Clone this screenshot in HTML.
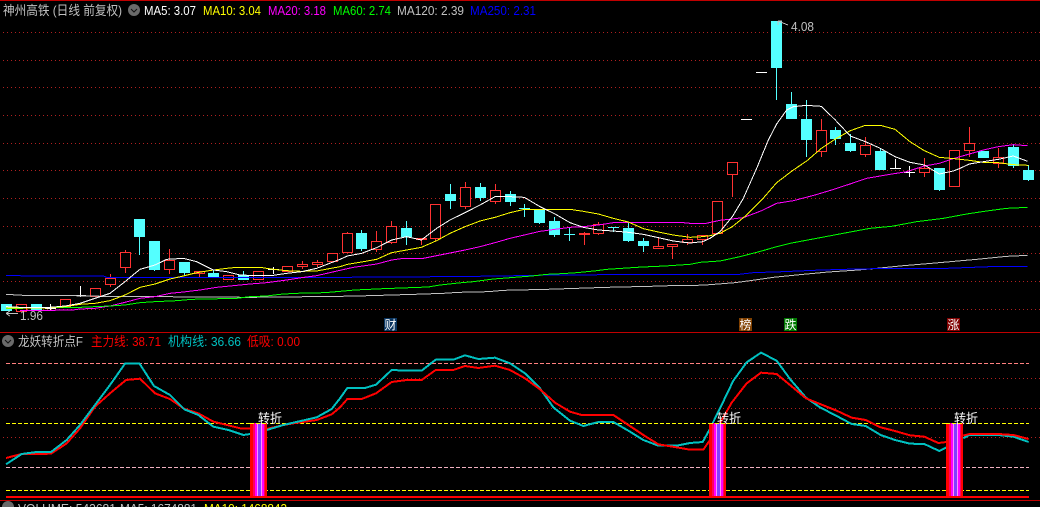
<!DOCTYPE html>
<html><head><meta charset="utf-8"><title>神州高铁</title>
<style>
html,body{margin:0;padding:0;background:#000;width:1040px;height:507px;overflow:hidden}
svg{display:block;position:absolute;left:0;top:0}
text{font-family:"Liberation Sans","Noto Sans CJK SC",sans-serif;font-size:13px}
polyline{fill:none;vector-effect:non-scaling-stroke;stroke-width:1;stroke-linejoin:round}
.i polyline{stroke-width:2}
</style></head><body>
<svg width="1040" height="507" viewBox="0 0 1040 507" shape-rendering="crispEdges">
<rect width="1040" height="507" fill="#000"/>
<rect width="1040" height="1" fill="#c00000"/>
<path d="M3 32.5H1040M3 60.5H1040M3 87.5H1040M3 115.5H1040M3 143.5H1040M3 170.5H1040M3 198.5H1040M3 226.5H1040M3 253.5H1040M3 281.5H1040M3 309.5H1040" stroke="#b02020" stroke-dasharray="1 3" fill="none"/>
<rect y="332" width="1040" height="1" fill="#c00000"/>
<rect y="500" width="1040" height="1" fill="#c00000"/>

<!-- candles -->
<path fill="#54ffff" d="M1 304h11v7h-11zM31 304h11v6h-11zM134 219h11v18h-11zM149 241h11v29h-11zM179 262h11v11h-11zM208 273h11v4h-11zM238 275h11v5h-11zM356 233h11v16h-11zM401 228h11v9h-11zM445 194h11v7h-11zM475 187h11v11h-11zM505 194h11v8h-11zM519 208h11v1h-11zM534 209h11v14h-11zM549 221h11v14h-11zM564 234h11v1h-11zM608 227h11v1h-11zM623 228h11v13h-11zM638 241h11v5h-11zM771 21h11v47h-11zM786 104h11v15h-11zM801 119h11v21h-11zM830 130h11v9h-11zM845 143h11v8h-11zM875 151h11v19h-11zM934 168h11v22h-11zM978 151h11v7h-11zM1008 147h11v19h-11zM1023 170h11v10h-11z"/>
<path stroke="#54ffff" fill="none" d="M139.5 237V255M154.5 270V271M184.5 273V275M213.5 270V273M243.5 271V275M361.5 230V233M361.5 249V251M406.5 221V228M406.5 237V245M450.5 184V194M450.5 201V209M480.5 183V187M480.5 198V201M510.5 191V194M510.5 202V206M524.5 204V217M539.5 223V224M554.5 217V221M554.5 235V237M569.5 227V241M613.5 227V232M628.5 223V228M628.5 241V242M643.5 238V241M643.5 246V252M776.5 68V100M791.5 92V104M806.5 100V119M806.5 140V157M835.5 127V130M835.5 139V145M850.5 134V143M850.5 151V152M880.5 148V151M939.5 190V191M1013.5 144V147M1013.5 166V168M1028.5 165V170M1028.5 180V181"/>
<path stroke="#ff3232" fill="#000" d="M16.5 304.5h10v7h-10zM60.5 299.5h10v7h-10zM90.5 288.5h10v8h-10zM105.5 278.5h10v6h-10zM120.5 252.5h10v15h-10zM164.5 260.5h10v9h-10zM194.5 271.5h10v2h-10zM223.5 275.5h10v4h-10zM253.5 271.5h10v8h-10zM282.5 266.5h10v5h-10zM297.5 264.5h10v2h-10zM312.5 262.5h10v2h-10zM327.5 253.5h10v8h-10zM342.5 233.5h10v19h-10zM371.5 241.5h10v8h-10zM386.5 226.5h10v16h-10zM430.5 204.5h10v34h-10zM460.5 187.5h10v19h-10zM490.5 190.5h10v11h-10zM593.5 224.5h10v9h-10zM653.5 246.5h10v2h-10zM667.5 244.5h10v2h-10zM682.5 239.5h10v3h-10zM697.5 235.5h10v4h-10zM712.5 201.5h10v32h-10zM727.5 162.5h10v12h-10zM816.5 130.5h10v21h-10zM860.5 145.5h10v9h-10zM919.5 168.5h10v4h-10zM949.5 150.5h10v36h-10zM964.5 143.5h10v7h-10zM993.5 157.5h10v6h-10z"/>
<path fill="#ff3232" d="M416 238h11v2h-11zM579 233h11v2h-11z"/>
<path stroke="#ff3232" fill="none" d="M110.5 274V278M110.5 285V287M125.5 250V252M125.5 268V273M169.5 249V260M169.5 270V274M199.5 274V277M302.5 261V264M302.5 267V269M317.5 260V262M317.5 265V267M347.5 232V233M376.5 231V241M376.5 250V252M391.5 221V226M391.5 243V244M421.5 240V245M435.5 239V241M465.5 182V187M465.5 207V209M495.5 184V190M495.5 202V204M584.5 232V245M598.5 222V224M598.5 234V235M658.5 238V246M672.5 247V259M687.5 234V239M687.5 243V245M702.5 240V245M732.5 175V197M821.5 119V130M821.5 152V157M865.5 137V145M865.5 155V157M924.5 158V168M924.5 173V177M969.5 127V143M969.5 151V157M998.5 148V157M998.5 164V168"/>
<path stroke="#fff" fill="none" d="M50.5 304V310M45 308.5H56M80.5 286V297M75 295.5H86M273.5 267V274M268 269.5H279M741 119.5H752M756 72.5H767M895.5 159V168M890 168.5H901M909.5 166V177M904 172.5H915"/>

<!-- moving averages: zone A x<340 -->
<g transform="translate(0 170) scale(.33333)">
<polyline stroke="#c0c0c0" points="18,373 87,377 218,377 310,379 485,380 750,382 930,380 1020,379"/>
<polyline stroke="#0000ff" points="18,316 87,318 310,318 320,322 1020,322"/>
<polyline stroke="#ff00ff" points="60,422 150,421 218,420 240,417 285,415 330,408 375,397 420,385 465,380 510,370 550,366 600,360 650,352 700,347 750,342 800,338 860,330 905,323 950,317 1020,301"/>
<polyline stroke="#00ff00" points="18,416 100,414 170,412 240,412 330,408 375,405 420,398 465,395 530,392 575,388 620,387 710,385 750,380 800,378 840,373 885,370 975,368 1020,364"/>
<polyline stroke="#ffff00" points="18,414 60,414 110,414 150,413 195,410 240,403 285,400 330,392 375,375 420,352 465,342 510,327 550,318 590,308 640,300 680,295 710,292 780,292 820,298 860,302 905,304 950,303 1020,290"/>
<polyline stroke="#ffffff" points="18,410 60,412 110,412 150,412 195,408 240,400 285,385 330,370 375,335 405,310 420,298 465,285 500,268 550,265 590,275 640,300 680,305 720,315 770,317 820,316 860,310 905,305 950,295 1020,268"/>
</g>
<!-- zone B 340-690 -->
<g transform="translate(340 170) scale(.33333)">
<polyline stroke="#c0c0c0" points="0,379 90,377 222,373 310,370 355,367 445,365 490,361 620,358 710,355 800,352 930,349 1020,346 1050,347"/>
<polyline stroke="#0000ff" points="0,322 310,320 490,318 575,316 800,314 1050,314"/>
<polyline stroke="#ff00ff" points="0,301 40,292 110,282 155,270 190,265 250,265 300,255 375,240 420,230 465,218 510,205 553,195 600,184 645,178 690,172 730,170 775,165 820,158 865,157 1020,157 1050,160"/>
<polyline stroke="#00ff00" points="0,364 45,360 130,356 265,351 300,345 365,338 400,335 460,327 575,318 620,313 665,311 710,308 770,302 800,298 845,295 890,292 930,290 975,288 1020,285 1050,283"/>
<polyline stroke="#ffff00" points="0,290 22,283 65,276 110,268 155,248 200,240 244,232 290,212 330,190 375,170 420,153 465,142 510,128 553,118 690,118 730,124 775,132 820,145 865,156 910,176 955,186 1000,195 1050,202"/>
<polyline stroke="#ffffff" points="0,268 22,258 65,250 110,233 155,210 200,200 244,210 290,175 330,150 375,128 420,105 465,80 510,80 553,82 600,110 645,132 690,158 730,172 775,180 820,183 865,187 910,193 955,203 1000,213 1050,219"/>
</g>
<!-- zone C 690+ -->
<g transform="translate(690 170) scale(.33333)">
<polyline stroke="#c0c0c0" points="0,347 60,344 135,338 180,332 250,322 340,313 415,306 505,300 550,296 640,287 725,280 860,268 950,259 1013,256"/>
<polyline stroke="#0000ff" points="0,314 148,313 190,308 280,305 370,301 460,298 600,295 770,295 900,290 1013,289"/>
<polyline stroke="#00ff00" points="0,283 30,277 90,273 150,260 215,243 260,230 300,220 380,205 470,188 540,175 605,169 680,155 760,145 830,132 890,123 950,115 1013,112"/>
<polyline stroke="#ff00ff" points="0,160 48,160 90,151 160,143 215,122 260,100 310,92 375,75 425,60 480,42 530,25 600,13 650,5 703,-12 748,-20 793,-35 838,-48 880,-60 925,-70 970,-76 1013,-73"/>
<polyline stroke="#ffff00" points="0,202 38,200 60,197 90,190 127,170 170,135 215,90 260,38 310,0 350,-27 394,-65 436,-93 481,-118 526,-134 571,-134 615,-122 660,-85 703,-58 748,-38 793,-34 838,-29 880,-23 925,-22 970,-16 1015,-14"/>
<polyline stroke="#ffffff" points="0,219 38,215 60,205 90,185 127,140 160,85 200,-5 235,-90 260,-138 290,-180 310,-190 349,-194 394,-191 436,-150 481,-102 526,-85 571,-65 615,-40 660,-23 703,-15 748,12 790,3 810,-5 838,-18 880,-25 925,-32 970,-42 1013,-26"/>
</g>

<!-- extreme labels -->
<path stroke="#c0c0c0" fill="none" d="M6 313.5H18M6 313.5L10 311M6 313.5L10 316M778 21L788 25M778 21V25M778 21H782"/>
<text x="20" y="320" fill="#c0c0c0" textLength="23" lengthAdjust="spacingAndGlyphs">1.96</text>
<text x="791" y="31" fill="#c0c0c0" textLength="23" lengthAdjust="spacingAndGlyphs">4.08</text>

<!-- title -->
<text x="3" y="15" fill="#c0c0c0" textLength="119" lengthAdjust="spacingAndGlyphs">神州高铁 (日线 前复权)</text>
<circle cx="134" cy="10" r="6" fill="#6a6a6a" shape-rendering="auto"/>
<path d="M131 9l3 3 3-3" stroke="#111" fill="none" shape-rendering="auto"/>
<text x="144" y="15" fill="#ffffff" textLength="52" lengthAdjust="spacingAndGlyphs">MA5: 3.07</text>
<text x="203" y="15" fill="#ffff00" textLength="58" lengthAdjust="spacingAndGlyphs">MA10: 3.04</text>
<text x="268" y="15" fill="#ff00ff" textLength="58" lengthAdjust="spacingAndGlyphs">MA20: 3.18</text>
<text x="333" y="15" fill="#00ff00" textLength="58" lengthAdjust="spacingAndGlyphs">MA60: 2.74</text>
<text x="397" y="15" fill="#c0c0c0" textLength="67" lengthAdjust="spacingAndGlyphs">MA120: 2.39</text>
<text x="470" y="15" fill="#0000ff" textLength="66" lengthAdjust="spacingAndGlyphs">MA250: 2.31</text>

<!-- badges -->
<rect x="384" y="318" width="13" height="13" fill="#0a3560"/>
<rect x="739" y="318" width="13" height="13" fill="#804000"/>
<rect x="784" y="318" width="13" height="13" fill="#007800"/>
<rect x="947" y="318" width="13" height="13" fill="#800000"/>
<g fill="#fff">
<text x="384.5" y="329" style="font-size:12px">财</text>
<text x="739.5" y="329" style="font-size:12px">榜</text>
<text x="784.5" y="329" style="font-size:12px">跌</text>
<text x="947.5" y="329" style="font-size:12px">涨</text>
</g>

<!-- indicator header -->
<circle cx="8" cy="341" r="6" fill="#6a6a6a" shape-rendering="auto"/>
<path d="M5 340l3 3 3-3" stroke="#111" fill="none" shape-rendering="auto"/>
<text x="18" y="346" fill="#c0c0c0" textLength="65" lengthAdjust="spacingAndGlyphs">龙妖转折点F</text>
<text x="91" y="346" fill="#ff0000" textLength="70" lengthAdjust="spacingAndGlyphs">主力线: 38.71</text>
<text x="168" y="346" fill="#00c0c0" textLength="73" lengthAdjust="spacingAndGlyphs">机构线: 36.66</text>
<text x="247" y="346" fill="#ff0000" textLength="53" lengthAdjust="spacingAndGlyphs">低吸: 0.00</text>

<!-- indicator guides -->
<path fill="none" stroke="#ff8080" stroke-dasharray="4 2" d="M6 363.5H1029"/>
<path fill="none" stroke="#b02020" stroke-dasharray="1 3" d="M3 378.5H1040M3 408.5H1040M3 437.5H1040"/>
<path fill="none" stroke="#ffff00" stroke-dasharray="4 2" d="M6 423.5H1029M6 490.5H1029"/>
<path fill="none" stroke="#f0b0c0" stroke-dasharray="4 2" d="M6 467.5H1029"/>

<!-- indicator lines -->
<g class="i">
<g transform="translate(0 330) scale(.33333)">
<polyline stroke="#ff0000" points="18,384 65,372 110,372 153,371 200,340 240,295 285,230 330,190 378,150 420,146 465,190 510,207 553,237 595,250 640,275 685,286 725,296 770,296 800,297 850,285 880,280 950,270 995,253 1020,232"/>
<polyline stroke="#00c0c0" points="18,403 65,372 110,366 153,366 200,330 240,285 285,225 330,165 375,101 418,100 462,168 510,195 553,238 595,255 640,290 685,300 730,315 745,313 770,305 800,300 850,285 880,278 950,262 995,237 1020,205"/>
</g>
<g transform="translate(340 330) scale(.33333)">
<polyline stroke="#00c0c0" points="0,205 22,174 75,174 108,164 155,120 200,122 245,122 287,89 340,89 375,76 415,87 465,83 510,100 555,130 600,175 640,232 690,272 730,288 775,276 820,276 865,302 910,330 955,347 1010,347 1050,339"/>
<polyline stroke="#ff0000" points="0,232 22,207 65,207 108,190 155,156 200,150 245,150 287,120 340,120 375,108 415,114 465,107 510,120 555,145 600,178 645,218 690,245 725,255 820,255 865,285 910,315 955,343 1010,352 1050,359"/>
</g>
<g transform="translate(690 330) scale(.33333)">
<polyline stroke="#00c0c0" points="0,339 38,336 58,300 90,235 130,152 170,97 213,68 260,92 300,147 348,203 390,232 440,258 485,282 527,288 572,315 615,330 660,341 703,342 748,363 770,352"/>
<polyline stroke="#ff0000" points="0,359 40,359 60,330 90,280 125,218 170,160 213,128 260,132 300,165 348,205 390,222 440,242 485,263 527,270 572,292 615,303 660,316 703,320 745,339 770,336"/>
<polyline stroke="#00c0c0" points="820,325 838,315 925,315 970,320 1016,336"/>
<polyline stroke="#ff0000" points="820,317 838,312 925,312 970,315 1016,327"/>
</g>
</g>

<!-- turn bars -->
<defs>
<g id="b">
<rect x="0" y="0" width="17" height="73" fill="#ff0000"/>
<rect x="3" y="0" width="2" height="73" fill="#ff0060"/>
<rect x="5" y="0" width="2" height="73" fill="#ff00ff"/>
<rect x="7" y="0" width="1" height="73" fill="#ff90ff"/>
<rect x="8" y="0" width="3" height="73" fill="#8040ff"/>
<rect x="11" y="0" width="1" height="73" fill="#ff90ff"/>
<rect x="12" y="0" width="2" height="73" fill="#ff00ff"/>
<rect x="14" y="0" width="1" height="73" fill="#ff0060"/>
</g>
</defs>
<use href="#b" x="250" y="423"/>
<use href="#b" x="709" y="423"/>
<use href="#b" x="946" y="423"/>
<rect x="6" y="496" width="1023" height="2" fill="#ff0000"/>
<path fill="none" stroke="#ffff00" stroke-dasharray="4 2" d="M250 423.5H267M709 423.5H726M946 423.5H963"/>
<text x="258" y="423" fill="#fff" textLength="24" lengthAdjust="spacingAndGlyphs">转折</text>
<text x="717" y="423" fill="#fff" textLength="24" lengthAdjust="spacingAndGlyphs">转折</text>
<text x="954" y="423" fill="#fff" textLength="24" lengthAdjust="spacingAndGlyphs">转折</text>

<!-- volume header -->
<circle cx="8" cy="507" r="6" fill="#6a6a6a" shape-rendering="auto"/>
<text x="18" y="513" fill="#c0c0c0" textLength="98" lengthAdjust="spacingAndGlyphs">VOLUME: 543681</text>
<text x="120" y="513" fill="#c0c0c0" textLength="77" lengthAdjust="spacingAndGlyphs">MA5: 1674881</text>
<text x="204" y="513" fill="#ffff00" textLength="83" lengthAdjust="spacingAndGlyphs">MA10: 1468843</text>
</svg>
</body></html>
